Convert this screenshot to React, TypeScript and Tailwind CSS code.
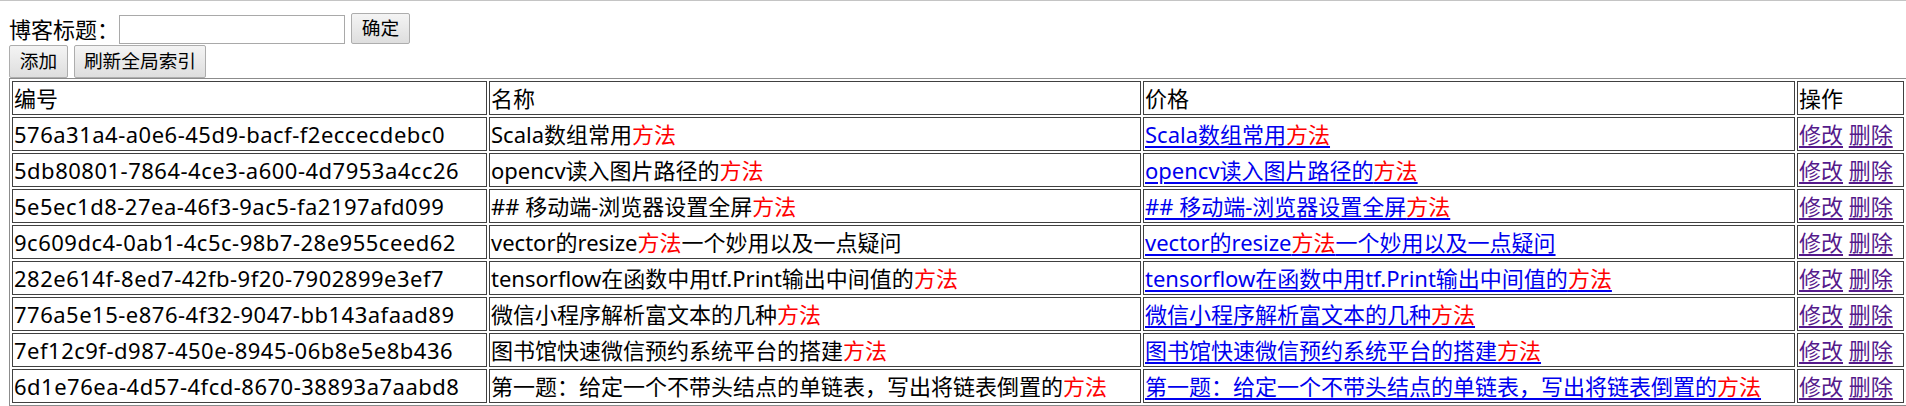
import type { ReactNode } from 'react';

type Blog = {
    id: string;
    title: string;
};

const blogs: Blog[] = [
    { id: '576a31a4-a0e6-45d9-bacf-f2eccecdebc0', title: 'Scala数组常用方法' },
    { id: '5db80801-7864-4ce3-a600-4d7953a4cc26', title: 'opencv读入图片路径的方法' },
    { id: '5e5ec1d8-27ea-46f3-9ac5-fa2197afd099', title: '## 移动端-浏览器设置全屏方法' },
    { id: '9c609dc4-0ab1-4c5c-98b7-28e955ceed62', title: 'vector的resize方法一个妙用以及一点疑问' },
    { id: '282e614f-8ed7-42fb-9f20-7902899e3ef7', title: 'tensorflow在函数中用tf.Print输出中间值的方法' },
    { id: '776a5e15-e876-4f32-9047-bb143afaad89', title: '微信小程序解析富文本的几种方法' },
    { id: '7ef12c9f-d987-450e-8945-06b8e5e8b436', title: '图书馆快速微信预约系统平台的搭建方法' },
    { id: '6d1e76ea-4d57-4fcd-8670-38893a7aabd8', title: '第一题：给定一个不带头结点的单链表，写出将链表倒置的方法' },
];

const font = "[font-family:'Noto_Sans','Noto_Sans_CJK_SC',sans-serif]";

export default function App() {
    return (
        <div className={`min-h-[406px] bg-white text-black ${font}`}>
            <div className="h-px bg-[#c4c4c4]" />

            <div className="px-[9px]">
                <div className="flex items-end pt-[12px]">
                    <label className="text-[22px] leading-[30px]">博客标题：</label>
                    <input
                        type="text"
                        className="h-[29px] w-[226px] border border-[#a9a9a9] bg-white px-1 text-[18px] outline-none"
                    />
                    <FormButton className="ml-[6px] h-[31px] w-[59px]">确定</FormButton>
                </div>

                <div className="mt-px flex gap-[6px]">
                    <FormButton className="h-[33px] w-[59px]">添加</FormButton>
                    <FormButton className="h-[33px] w-[132px]">刷新全局索引</FormButton>
                </div>

                <table className="w-[1898px] table-fixed border-separate border-spacing-[2px] border border-[#8c8c8c] text-[22px] leading-[30px]">
                    <thead>
                        <tr>
                            <Cell className="w-[475px]">编号</Cell>
                            <Cell className="w-[652px]">名称</Cell>
                            <Cell className="w-[652px]">价格</Cell>
                            <Cell className="w-[107px]">操作</Cell>
                        </tr>
                    </thead>
                    <tbody>
                        {blogs.map((blog) => (
                            <tr key={blog.id}>
                                <Cell className="tracking-[0.5px]">{blog.id}</Cell>
                                <Cell>
                                    <Title text={blog.title} />
                                </Cell>
                                <Cell>
                                    <a
                                        href="#"
                                        className="text-[#0000ee] underline decoration-[#0000ee] underline-offset-[3px]"
                                    >
                                        <Title text={blog.title} />
                                    </a>
                                </Cell>
                                <Cell>
                                    <a href="#" className="text-[#551a8b] underline underline-offset-[3px]">
                                        修改
                                    </a>{' '}
                                    <a href="#" className="text-[#551a8b] underline underline-offset-[3px]">
                                        删除
                                    </a>
                                </Cell>
                            </tr>
                        ))}
                    </tbody>
                </table>
            </div>
        </div>
    );
}

function FormButton({ className, children }: { className: string; children: ReactNode }) {
    return (
        <button
            type="button"
            className={`${className} rounded-[2px] border border-[#adadad] bg-gradient-to-b from-[#f4f4f4] to-[#dedede] p-0 text-center text-[18.7px] leading-none text-black`}
        >
            {children}
        </button>
    );
}

function Cell({ className = '', children }: { className?: string; children: ReactNode }) {
    return (
        <td className={`${className} overflow-hidden border border-[#404040] p-px align-middle whitespace-nowrap`}>
            {children}
        </td>
    );
}

function Title({ text }: { text: string }) {
    const [before, after] = text.split('方法');

    return (
        <>
            {before}
            <span className="text-[#ff0000]">方法</span>
            {after}
        </>
    );
}
